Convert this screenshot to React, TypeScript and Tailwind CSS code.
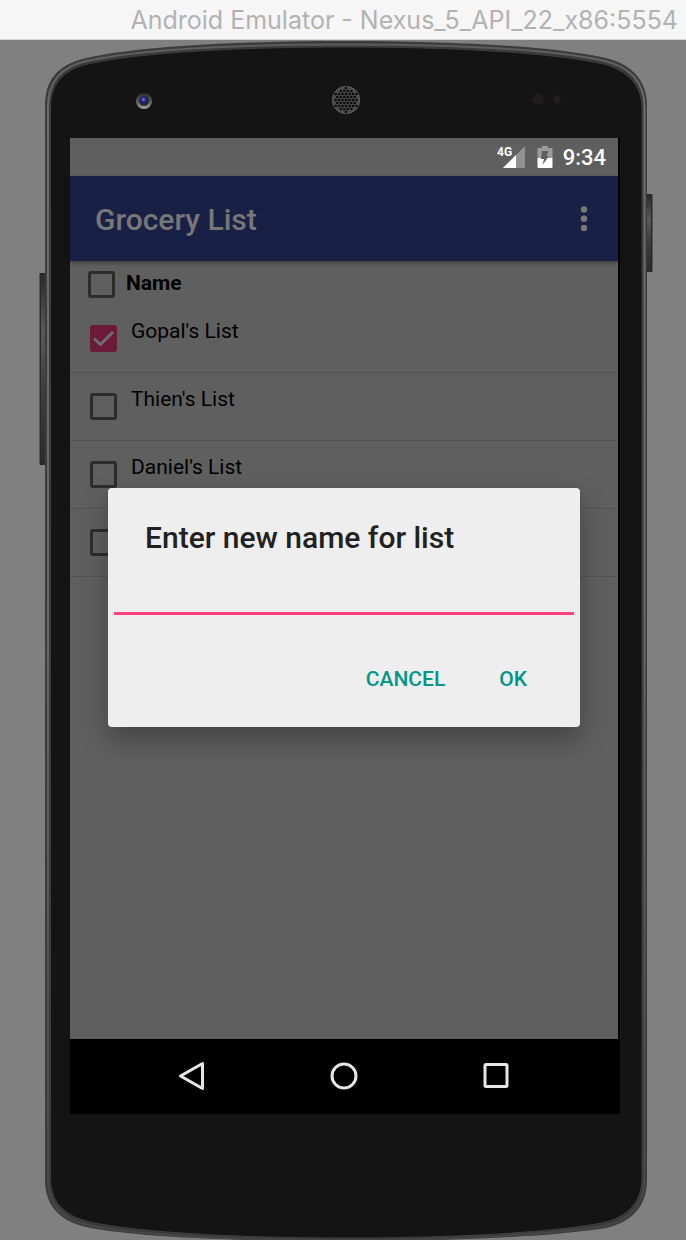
import React, { useState } from "react";

const lists = [
  { id: "gopal", name: "Gopal's List" },
  { id: "thien", name: "Thien's List" },
  { id: "daniel", name: "Daniel's List" },
  { id: "untitled", name: "" },
];

const OUTER =
  "M45 66 C45 40 57 25 86 18 C140 6 240 1 346 1 C452 1 550 6 606 18 C634 25 647 42 647 66 V1140 C647 1166 632 1182 606 1188 C550 1197 450 1201 346 1201 C242 1201 140 1198 86 1187 C60 1181 45 1166 45 1140 Z";
const MIDDLE =
  "M48 67 C48 42 60 27 87 21 C141 9 241 4.500 346 4.500 C451 4.500 549 9 605 21 C632 28 644.500 44 644.500 67 V1139 C644.500 1164 630 1180 604 1186 C549 1195 450 1200 346 1200 C242 1200 141 1196 88 1185 C62 1179 48 1164 48 1139 Z";
const INNER =
  "M50.500 68 C50.500 45 62 30 88 24 C142 12 242 7 346 7 C450 7 548 12 604 24 C629 31 642 47 642 68 V1138 C642 1162 628 1177 602 1183 C548 1193 450 1198 346 1198 C242 1198 142 1193 90 1182 C64 1176 50.500 1162 50.500 1138 Z";

function grilleHoles() {
  const holes: { x: number; y: number }[] = [];
  for (let r = -4; r <= 4; r++) {
    for (let c = -4; c <= 4; c++) {
      const x = c * 3.5 + (r % 2 ? 1.75 : 0);
      const y = r * 3;
      if (x * x + y * y < 155) holes.push({ x: 346 + x, y: 60 + y });
    }
  }
  return holes;
}

function DeviceBody() {
  return (
    <svg
      className="absolute inset-0 h-full w-full"
      viewBox="0 0 686 1200"
      preserveAspectRatio="none"
      aria-hidden="true"
    >
      <defs>
        <linearGradient id="key" x1="0" y1="0" x2="0" y2="1">
          <stop offset="0" stopColor="#2c2c2c" />
          <stop offset="0.3" stopColor="#5a5a5a" />
          <stop offset="0.6" stopColor="#3e3e3e" />
          <stop offset="1" stopColor="#2c2c2c" />
        </linearGradient>
        <linearGradient id="edge" x1="0" y1="0" x2="0" y2="1">
          <stop offset="0" stopColor="#5c5c5c" />
          <stop offset="0.06" stopColor="#6f6f72" />
          <stop offset="0.5" stopColor="#66666a" />
          <stop offset="0.95" stopColor="#484848" />
          <stop offset="1" stopColor="#454545" />
        </linearGradient>
        <radialGradient id="lens" cx="0.45" cy="0.4" r="0.6">
          <stop offset="0" stopColor="#8f92d8" />
          <stop offset="0.35" stopColor="#2a2a8c" />
          <stop offset="1" stopColor="#1c1c28" />
        </radialGradient>
        <linearGradient id="ring" x1="0" y1="0" x2="0" y2="1">
          <stop offset="0" stopColor="#2a2a2a" />
          <stop offset="0.5" stopColor="#5a5a5a" />
          <stop offset="1" stopColor="#a5a5a5" />
        </linearGradient>
      </defs>
      <rect x="39.500" y="233" width="7" height="192" rx="1" fill="#2a2a2a" />
      <rect x="41" y="236" width="4" height="186" fill="url(#key)" />
      <rect x="646" y="154" width="6.500" height="78" rx="1" fill="#2a2a2a" />
      <rect x="647" y="157" width="4" height="72" fill="url(#key)" />
      <path d={OUTER} fill="#3c3c3d" />
      <path d={MIDDLE} fill="#39393a" stroke="url(#edge)" strokeWidth="2" />
      <path d={INNER} fill="#141414" stroke="#3e3e3f" strokeWidth="1" />
      <circle cx="144" cy="61" r="8" fill="url(#ring)" />
      <circle cx="144" cy="60.500" r="5.500" fill="#3c3c3c" />
      <circle cx="144" cy="60.500" r="4.500" fill="url(#lens)" />
      <circle cx="346" cy="60" r="14" fill="#4a4a4a" />
      <circle cx="346" cy="60" r="13.500" fill="none" stroke="#5c5c5c" />
      {grilleHoles().map((h) => (
        <circle key={`${h.x}-${h.y}`} cx={h.x} cy={h.y} r="1.300" fill="#0c0c0c" />
      ))}
      <circle cx="538" cy="59" r="6" fill="#1d1b1c" />
      <circle cx="538" cy="59" r="2" fill="#241e20" />
      <circle cx="557" cy="59" r="4" fill="#1f1b1c" />
      <circle cx="557" cy="59" r="1.500" fill="#272022" />
    </svg>
  );
}

function StatusBar() {
  return (
    <div className="flex h-[38px] items-center justify-end pr-3 text-white">
      <svg className="h-6 w-7" viewBox="0 0 28 24" aria-hidden="true">
        <path d="M28 1V23H6Z" fill="#919191" />
        <path d="M19 10V23H6Z" fill="#fff" />
        <text
          x="0"
          y="11"
          fill="#fff"
          className="font-['Liberation_Sans_Narrow','Roboto',sans-serif] text-[12px] font-bold"
        >
          4G
        </text>
      </svg>
      <svg className="ml-3 h-6 w-4" viewBox="0 0 16 24" aria-hidden="true">
        <path d="M5 1H11V3H14.500Q15.500 3 15.500 4V13H0.500V4Q0.500 3 1.500 3H5Z" fill="#9b9b9b" />
        <path d="M0.500 13H15.500V22Q15.500 23 14.500 23H1.500Q0.500 23 0.500 22Z" fill="#fff" />
        <path d="M5 6H11.500L9.500 11H12L5.500 20L7 14H4Z" fill="#5f5f5f" />
      </svg>
      <span className="ml-2.5 pt-0.5 text-[22px] leading-7 font-medium">9:34</span>
    </div>
  );
}

type TickProps = { id: string; label?: string; checked: boolean; onChange: () => void };

function Tick({ id, label, checked, onChange }: TickProps) {
  return (
    <span className="grid size-[27px] shrink-0">
      <input
        id={id}
        type="checkbox"
        aria-label={label}
        checked={checked}
        onChange={onChange}
        className="col-start-1 row-start-1 size-[27px] appearance-none rounded-[3px] border-3 border-[#2c2c2c] checked:border-[#6b1a37] checked:bg-[#6b1a37]"
      />
      {checked && (
        <svg
          className="pointer-events-none col-start-1 row-start-1 size-[27px]"
          viewBox="0 0 27 27"
          fill="none"
          stroke="#6d6d6d"
          strokeWidth="3"
          aria-hidden="true"
        >
          <path d="M4 13.500L10.500 19.500L23 7" />
        </svg>
      )}
    </span>
  );
}

function RenameDialog() {
  const [value, setValue] = useState("");
  return (
    <div className="absolute inset-0 flex items-center justify-center px-[38px]">
      <form
        role="dialog"
        aria-labelledby="dialog-title"
        onSubmit={(e) => e.preventDefault()}
        className="w-full rounded-[4px] bg-[#eeeeee] pb-[19px] shadow-[0_12px_24px_2px_rgba(0,0,0,0.25)]"
      >
        <h2 id="dialog-title" className="px-[37px] pt-8 text-[30px] leading-9 font-medium text-[#212121]">
          <label htmlFor="list-name">Enter new name for list</label>
        </h2>
        <div className="px-1.5 pt-4">
          <input
            id="list-name"
            type="text"
            value={value}
            onChange={(e) => setValue(e.target.value)}
            className="block h-[43px] w-full border-b-3 border-[#ff4081] bg-transparent px-1 text-[22px] text-[#212121] outline-none"
          />
        </div>
        <div className="flex justify-end gap-3.5 pt-[37px] pr-[33px] text-[21px] font-medium text-[#009688]">
          <button type="button" className="h-14 px-5">
            CANCEL
          </button>
          <button type="submit" className="h-14 px-5">
            OK
          </button>
        </div>
      </form>
    </div>
  );
}

function NavBar() {
  return (
    <nav className="flex h-[75px] justify-center text-[#e6e6e6]">
      <button type="button" aria-label="Back" className="flex w-[152px] items-center justify-center">
        <svg className="size-8" viewBox="0 0 32 32" fill="none" stroke="currentColor" strokeWidth="3" strokeLinejoin="round">
          <path d="M26.500 2.500V27.500L4.500 15Z" />
        </svg>
      </button>
      <button type="button" aria-label="Home" className="flex w-[152px] items-center justify-center">
        <svg className="size-8" viewBox="0 0 32 32" fill="none" stroke="currentColor" strokeWidth="3">
          <circle cx="16" cy="15" r="12" />
        </svg>
      </button>
      <button type="button" aria-label="Overview" className="flex w-[152px] items-center justify-center">
        <svg className="size-8" viewBox="0 0 32 32" fill="none" stroke="currentColor" strokeWidth="3">
          <rect x="5" y="3.500" width="22" height="22" rx="1" />
        </svg>
      </button>
    </nav>
  );
}

export default function App() {
  const [selected, setSelected] = useState<string[]>(["gopal"]);
  const toggle = (id: string) =>
    setSelected((s) => (s.includes(id) ? s.filter((x) => x !== id) : [...s, id]));
  const all = selected.length === lists.length;

  return (
    <div className="flex min-h-screen flex-col bg-[#808080] font-['Roboto',sans-serif]">
      <header className="flex h-10 items-center justify-end border-b border-[#d2d2d2] bg-[#f6f6f6] pr-2 font-['Inter',sans-serif] text-[25px] leading-8 whitespace-nowrap text-[#b2b2b2]">
        Android Emulator - Nexus_5_API_22_x86:5554
      </header>
      <div className="relative pt-[98px] pr-[66px] pb-[126px] pl-[70px]">
        <DeviceBody />
        <div className="relative bg-black pr-0.5">
          <div className="bg-[#5f5f5f]">
            <StatusBar />
            <div className="relative min-h-[863px]">
              <div className="flex h-[85px] items-center justify-between bg-[#192046] pr-6 pl-[25px] text-[#777777] shadow-[0_2px_4px_rgba(0,0,0,0.35)]">
                <h1 className="pt-0.5 text-[30px] leading-9 font-medium">Grocery List</h1>
                <button type="button" aria-label="More options">
                  <svg className="h-7 w-5" viewBox="0 0 20 28" fill="currentColor">
                    <circle cx="10" cy="4.500" r="3.200" />
                    <circle cx="10" cy="13.700" r="3.200" />
                    <circle cx="10" cy="22.900" r="3.200" />
                  </svg>
                </button>
              </div>
              <div className="flex h-11 items-center gap-[11px] pt-0.5 pl-[18px] text-[21px] font-bold text-black">
                <Tick
                  id="all"
                  checked={all}
                  onChange={() => setSelected(all ? [] : lists.map((l) => l.id))}
                />
                <label htmlFor="all">Name</label>
              </div>
              <ul>
                {lists.map((l) => (
                  <li
                    key={l.id}
                    className="flex h-17 items-start gap-3.5 border-b border-[#535353] pl-5 text-[21px] text-black"
                  >
                    <span className="pt-5">
                      <Tick
                        id={l.id}
                        label={l.name ? undefined : "Unnamed list"}
                        checked={selected.includes(l.id)}
                        onChange={() => toggle(l.id)}
                      />
                    </span>
                    {l.name && (
                      <label htmlFor={l.id} className="pt-[11px] leading-[30px]">
                        {l.name}
                      </label>
                    )}
                  </li>
                ))}
              </ul>
              <RenameDialog />
            </div>
          </div>
          <NavBar />
        </div>
      </div>
    </div>
  );
}
